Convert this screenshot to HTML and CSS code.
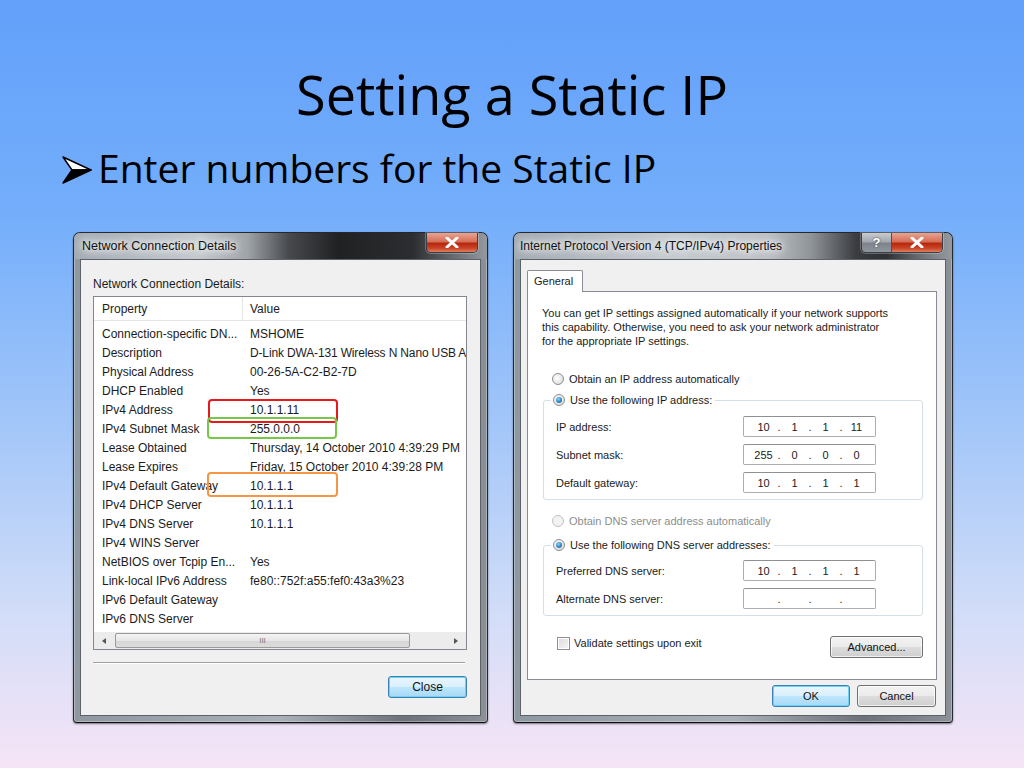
FILE: index.html
```html
<!DOCTYPE html>
<html lang="en">
<head>
    <meta charset="UTF-8">
    <title>Setting a Static IP</title>
    <link rel="stylesheet" href="styles.css">
</head>
<body>
    <div class="slide">
        <h1 class="slide-title">Setting a Static IP</h1>
        <ul class="bullets">
            <li>
                <svg class="bullet-arrow" width="30" height="28" viewBox="0 0 30 28">
                    <polygon points="1,1 29,14 10,14" fill="#fff" stroke="#000" stroke-width="1.5" stroke-linejoin="round"/>
                    <polygon points="10,14 29,14 1,27" fill="#000" stroke="#000" stroke-width="1.5" stroke-linejoin="round"/>
                </svg>
                <span>Enter numbers for the Static IP</span>
            </li>
        </ul>

        <div class="shots">
            <!-- left: connection details -->
            <div class="win win-details">
                <div class="titlebar">
                    <span class="win-title">Network Connection Details</span>
                    <div class="caption-btns">
                        <span class="cap-btn cap-close">
                            <svg width="14" height="11" viewBox="0 0 14 11"><path d="M2 1 L12 10 M12 1 L2 10" stroke="#fff" stroke-width="3" stroke-linecap="round"/></svg>
                        </span>
                    </div>
                </div>
                <div class="client details-client">
                    <div class="details-label">Network Connection Details:</div>
                    <div class="listbox">
                        <div class="list-head">
                            <span class="col-prop">Property</span>
                            <span class="col-val">Value</span>
                        </div>
                        <div class="list-rows">
                            <div class="row"><span class="col-prop">Connection-specific DN...</span><span class="col-val">MSHOME</span></div>
                            <div class="row"><span class="col-prop">Description</span><span class="col-val tight">D-Link DWA-131 Wireless N Nano USB A</span></div>
                            <div class="row"><span class="col-prop">Physical Address</span><span class="col-val">00-26-5A-C2-B2-7D</span></div>
                            <div class="row"><span class="col-prop">DHCP Enabled</span><span class="col-val">Yes</span></div>
                            <div class="row"><span class="col-prop">IPv4 Address</span><span class="col-val">10.1.1.11</span></div>
                            <div class="row"><span class="col-prop">IPv4 Subnet Mask</span><span class="col-val">255.0.0.0</span></div>
                            <div class="row"><span class="col-prop">Lease Obtained</span><span class="col-val">Thursday, 14 October 2010 4:39:29 PM</span></div>
                            <div class="row"><span class="col-prop">Lease Expires</span><span class="col-val">Friday, 15 October 2010 4:39:28 PM</span></div>
                            <div class="row"><span class="col-prop">IPv4 Default Gateway</span><span class="col-val">10.1.1.1</span></div>
                            <div class="row"><span class="col-prop">IPv4 DHCP Server</span><span class="col-val">10.1.1.1</span></div>
                            <div class="row"><span class="col-prop">IPv4 DNS Server</span><span class="col-val">10.1.1.1</span></div>
                            <div class="row"><span class="col-prop">IPv4 WINS Server</span><span class="col-val"></span></div>
                            <div class="row"><span class="col-prop">NetBIOS over Tcpip En...</span><span class="col-val">Yes</span></div>
                            <div class="row"><span class="col-prop">Link-local IPv6 Address</span><span class="col-val">fe80::752f:a55:fef0:43a3%23</span></div>
                            <div class="row"><span class="col-prop">IPv6 Default Gateway</span><span class="col-val"></span></div>
                            <div class="row"><span class="col-prop">IPv6 DNS Server</span><span class="col-val"></span></div>
                        </div>
                        <div class="hscroll">
                            <span class="sb-arrow sb-left"></span>
                            <div class="sb-track"><div class="sb-thumb"><span class="grip">III</span></div></div>
                            <span class="sb-arrow sb-right"></span>
                        </div>
                        <span class="mark mark-red"></span>
                        <span class="mark mark-green"></span>
                        <span class="mark mark-orange"></span>
                    </div>
                    <div class="sep"></div>
                    <div class="btn-row">
                        <button class="btn btn-default btn-close">Close</button>
                    </div>
                </div>
            </div>

            <!-- right: tcp/ipv4 properties -->
            <div class="win win-props">
                <div class="titlebar">
                    <span class="win-title">Internet Protocol Version 4 (TCP/IPv4) Properties</span>
                    <div class="caption-btns">
                        <span class="cap-btn cap-help">?</span>
                        <span class="cap-btn cap-close">
                            <svg width="14" height="11" viewBox="0 0 14 11"><path d="M2 1 L12 10 M12 1 L2 10" stroke="#fff" stroke-width="3" stroke-linecap="round"/></svg>
                        </span>
                    </div>
                </div>
                <div class="client props-client">
                    <div class="tabs"><span class="tab">General</span></div>
                    <div class="tab-panel">
                        <p class="intro">You can get IP settings assigned automatically if your network supports<br>this capability. Otherwise, you need to ask your network administrator<br>for the appropriate IP settings.</p>

                        <div class="opt"><span class="radio"></span>Obtain an IP address automatically</div>
                        <fieldset class="group">
                            <legend class="opt"><span class="radio checked"></span>Use the following IP address:</legend>
                            <div class="field"><span class="field-label">IP address:</span>
                                <span class="ipbox"><i>10</i><b>.</b><i>1</i><b>.</b><i>1</i><b>.</b><i>11</i></span></div>
                            <div class="field"><span class="field-label">Subnet mask:</span>
                                <span class="ipbox"><i>255</i><b>.</b><i>0</i><b>.</b><i>0</i><b>.</b><i>0</i></span></div>
                            <div class="field"><span class="field-label">Default gateway:</span>
                                <span class="ipbox"><i>10</i><b>.</b><i>1</i><b>.</b><i>1</i><b>.</b><i>1</i></span></div>
                        </fieldset>

                        <div class="opt opt-dns disabled"><span class="radio"></span>Obtain DNS server address automatically</div>
                        <fieldset class="group group-dns">
                            <legend class="opt"><span class="radio checked"></span>Use the following DNS server addresses:</legend>
                            <div class="field"><span class="field-label">Preferred DNS server:</span>
                                <span class="ipbox"><i>10</i><b>.</b><i>1</i><b>.</b><i>1</i><b>.</b><i>1</i></span></div>
                            <div class="field"><span class="field-label">Alternate DNS server:</span>
                                <span class="ipbox"><i></i><b>.</b><i></i><b>.</b><i></i><b>.</b><i></i></span></div>
                        </fieldset>

                        <div class="validate-row">
                            <label class="check"><span class="checkbox"></span>Validate settings upon exit</label>
                            <button class="btn btn-adv">Advanced...</button>
                        </div>
                    </div>
                    <div class="btn-row props-btns">
                        <button class="btn btn-default btn-ok">OK</button>
                        <button class="btn btn-cancel">Cancel</button>
                    </div>
                </div>
            </div>
        </div>
    </div>
</body>
</html>
```

FILE: styles.css
```css
* {
    box-sizing: border-box;
}

body {
    margin: 0;
    width: 1024px;
    height: 768px;
    overflow: hidden;
    background: linear-gradient(to bottom, #62a0fa 0%, #74aefb 28%, #a2c6f9 55%, #d2ddf8 80%, #f6e4f6 100%);
    font-family: "Liberation Sans", Arial, sans-serif;
    color: #000;
}

.slide-title {
    margin: 0;
    padding-top: 62px;
    font-family: "Open Sans", sans-serif;
    font-weight: 400;
    font-size: 54px;
    line-height: 64px;
    text-align: center;
}

.bullets {
    list-style: none;
    margin: 18px 0 0;
    padding: 0 0 0 62px;
}

.bullets li {
    display: flex;
    align-items: center;
    gap: 6px;
    font-family: "Open Sans", sans-serif;
    font-size: 39px;
    line-height: 48px;
}

.bullet-arrow {
    margin-top: 4px;
}

.shots {
    display: flex;
    gap: 25px;
    margin-top: 40px;
    padding-left: 73px;
}

/* ---- window chrome ---- */
.win {
    height: 491px;
    display: flex;
    flex-direction: column;
    padding: 0 6px 6px;
    border: 1px solid #23282e;
    border-bottom-color: #0c0d0f;
    border-radius: 7px 7px 4px 4px;
    background: linear-gradient(to right, #8e98a1 0%, #a9b0b7 50%, #6d7278 80%, #8c9197 100%);
    box-shadow: inset 0 0 0 1px rgba(255, 255, 255, 0.3), 0 1px 2px rgba(0, 0, 0, 0.5);
}

.win-details {
    width: 415px;
}

.win-props {
    width: 440px;
}

.titlebar {
    height: 26px;
    margin: 0 -6px;
    padding: 0 6px;
    display: flex;
    align-items: flex-start;
    justify-content: space-between;
    border-radius: 6px 6px 0 0;
    background: linear-gradient(to right, #a3abb3 0%, #c4c9ce 30%, #9fa4a9 42%, #47494d 52%, #202123 64%, #2c2d30 82%, #6e7277 93%, #959aa0 100%);
}

.win-props .titlebar {
    background: linear-gradient(to right, #a3abb3 0%, #c6cbd0 35%, #bcc1c6 58%, #8e9398 68%, #3a3c40 78%, #2f3033 85%, #74787d 94%, #959aa0 100%);
}

.win-title {
    margin: 6px 0 0 2px;
    font-size: 12.5px;
    line-height: 14px;
    color: #111;
    text-shadow: 0 0 6px #fff, 0 0 10px #fff, 0 0 14px rgba(255, 255, 255, 0.9);
}

.win-props .win-title {
    margin-left: 0;
    font-size: 12px;
}

.caption-btns {
    display: flex;
    margin-right: 3px;
    border: 1px solid #3a3f45;
    border-top: none;
    border-radius: 0 0 5px 5px;
    overflow: hidden;
    box-shadow: 0 0 0 1px rgba(255, 255, 255, 0.25);
}

.cap-btn {
    height: 19px;
    display: flex;
    align-items: center;
    justify-content: center;
    color: #fff;
    font-weight: bold;
    font-size: 13px;
}

.cap-close {
    width: 50px;
    background: linear-gradient(to bottom, #e8a493 0%, #d56f58 45%, #b8280f 55%, #c94428 80%, #e08060 100%);
}

.cap-help {
    width: 30px;
    border-right: 1px solid #4a5058;
    background: linear-gradient(to bottom, #c8ccd0 0%, #a2a8ae 45%, #7d848b 55%, #8f969d 100%);
    text-shadow: 0 0 2px #333;
}

.client {
    flex: 1;
    display: flex;
    flex-direction: column;
    background: #f0f0f0;
    border: 1px solid #5c6268;
}

/* ---- details dialog ---- */
.details-client {
    padding: 16px 13px 0 12px;
    font-size: 12px;
    color: #1b1b1b;
}

.details-label {
    line-height: 16px;
    margin-bottom: 4px;
}

.listbox {
    position: relative;
    height: 354px;
    display: flex;
    flex-direction: column;
    background: #fff;
    border: 1px solid #828790;
    overflow: hidden;
}

.list-head {
    height: 24px;
    display: flex;
    align-items: center;
    border-bottom: 1px solid #e5e5e5;
}

.list-head .col-prop {
    border-right: 1px solid #e5e5e5;
    height: 100%;
    display: flex;
    align-items: center;
}

.col-prop {
    width: 149px;
    flex-shrink: 0;
    padding-left: 8px;
    white-space: nowrap;
}

.col-val {
    padding-left: 7px;
    white-space: nowrap;
}

.col-val.tight {
    letter-spacing: -0.15px;
}

.list-rows {
    flex: 1;
    padding-top: 3px;
}

.row {
    height: 19px;
    display: flex;
    align-items: center;
}

.hscroll {
    height: 17px;
    display: flex;
    align-items: center;
    background: #ececec;
}

.sb-arrow {
    width: 20px;
    height: 17px;
    display: flex;
    align-items: center;
    justify-content: center;
}

.sb-left::before,
.sb-right::before {
    content: "";
    border-top: 3px solid transparent;
    border-bottom: 3px solid transparent;
}

.sb-left::before {
    border-right: 4px solid #555;
}

.sb-right::before {
    border-left: 4px solid #555;
}

.sb-track {
    flex: 1;
    height: 17px;
    padding: 1px 36px 1px 1px;
}

.sb-thumb {
    height: 15px;
    display: flex;
    align-items: center;
    justify-content: center;
    border: 1px solid #9a9a9a;
    border-radius: 2px;
    background: linear-gradient(to bottom, #f4f4f4 0%, #e6e6e6 50%, #d6d6d6 51%, #dcdcdc 100%);
}

.grip {
    font-size: 8px;
    color: #777;
}

.mark {
    position: absolute;
    border-width: 2.5px;
    border-style: solid;
    border-radius: 4px;
    pointer-events: none;
}

.mark-red {
    left: 114px;
    top: 102px;
    width: 130px;
    height: 24px;
    border-color: #e61a1e;
}

.mark-green {
    left: 113px;
    top: 120px;
    width: 130px;
    height: 22px;
    border-color: #76c84a;
}

.mark-orange {
    left: 113px;
    top: 175px;
    width: 131px;
    height: 25px;
    border-color: #f39746;
}

.sep {
    height: 2px;
    margin: 12px 2px 0 0;
    border-top: 1px solid #a0a0a0;
    border-bottom: 1px solid #fff;
}

.btn-row {
    display: flex;
    justify-content: flex-end;
}

.details-client .btn-row {
    margin-top: 12px;
}

/* ---- buttons ---- */
.btn {
    height: 22px;
    padding: 0;
    font-family: "Liberation Sans", Arial, sans-serif;
    font-size: 12px;
    color: #111;
    border: 1px solid #707070;
    border-radius: 3px;
    background: linear-gradient(to bottom, #f3f3f3 0%, #ebebeb 49%, #dddddd 50%, #cfcfcf 100%);
    box-shadow: inset 0 0 0 1px rgba(255, 255, 255, 0.7);
}

.btn-default {
    border-color: #3c7fb1;
    background: linear-gradient(to bottom, #eaf6fd 0%, #d9f0fc 49%, #bee6fd 50%, #a7d9f5 100%);
    box-shadow: inset 0 0 0 1px #6fd2f4;
}

.btn-close {
    width: 79px;
}

/* ---- tcp/ip dialog ---- */
.props-client {
    padding: 10px 8px 0 6px;
    font-size: 11px;
    color: #1b1b1b;
}

.tabs {
    display: flex;
    height: 22px;
    position: relative;
    z-index: 1;
}

.tab {
    width: 56px;
    height: 22px;
    padding: 4px 0 0 6px;
    background: #fff;
    border: 1px solid #898c95;
    border-bottom: none;
    border-radius: 2px 2px 0 0;
    font-size: 11px;
}

.tab-panel {
    height: 389px;
    margin-top: -1px;
    padding: 14px 13px 0 14px;
    background: #fff;
    border: 1px solid #898c95;
}

.intro {
    margin: 0;
    line-height: 14px;
    white-space: nowrap;
}

.opt {
    display: flex;
    align-items: center;
    height: 16px;
    margin: 23px 0 0 10px;
}

.opt.disabled {
    color: #8d8d8d;
}

.opt-dns {
    margin-top: 13px;
}

.radio {
    width: 12px;
    height: 12px;
    margin-right: 5px;
    border-radius: 50%;
    border: 1px solid #8c8f94;
    background: radial-gradient(circle at 40% 40%, #ffffff 0%, #e6e6e6 60%, #c8c8c8 100%);
    display: flex;
    align-items: center;
    justify-content: center;
}

.disabled .radio {
    border-color: #c3c3c3;
    background: #f2f2f2;
}

.radio.checked::after {
    content: "";
    width: 6px;
    height: 6px;
    border-radius: 50%;
    background: radial-gradient(circle at 40% 35%, #8fd3f5 0%, #2f86c2 55%, #1c4f7e 100%);
}

.group {
    margin: 5px 0 0 1px;
    padding: 0 45px 6px 12px;
    border: 1px solid #d5dfe5;
    border-radius: 3px;
}

.group legend.opt {
    margin: 0 0 0 -5px;
    padding: 0 3px 0 2px;
}

.group-dns {
    margin-top: 8px;
}

.field {
    display: flex;
    align-items: center;
    margin-top: 7px;
}

.group .field:first-of-type {
    margin-top: 8px;
}

.group-dns .field:first-of-type {
    margin-top: 7px;
}

.field-label {
    width: 187px;
}

.ipbox {
    width: 133px;
    height: 21px;
    display: flex;
    align-items: center;
    padding-left: 7px;
    border: 1px solid #abadb3;
    border-top-color: #8e9093;
    border-radius: 2px;
    background: #fff;
}

.ipbox i {
    font-style: normal;
    width: 25px;
    text-align: center;
}

.ipbox b {
    font-weight: normal;
    width: 6px;
    text-align: center;
}

.validate-row {
    display: flex;
    align-items: center;
    justify-content: space-between;
    margin: 20px 0 0 15px;
    height: 22px;
}

.check {
    display: flex;
    align-items: center;
    margin-top: -8px;
}

.checkbox {
    width: 13px;
    height: 13px;
    margin-right: 4px;
    border: 1px solid #8f8f8f;
    background: linear-gradient(135deg, #dcdcdc 0%, #f6f6f6 100%);
    box-shadow: inset 0 0 0 1px #fff;
}

.btn-adv {
    width: 93px;
    font-size: 11px;
}

.props-btns {
    margin-top: 5px;
    gap: 7px;
    padding-right: 1px;
}

.btn-ok {
    width: 78px;
    font-size: 11px;
}

.btn-cancel {
    width: 79px;
    font-size: 11px;
}
```
